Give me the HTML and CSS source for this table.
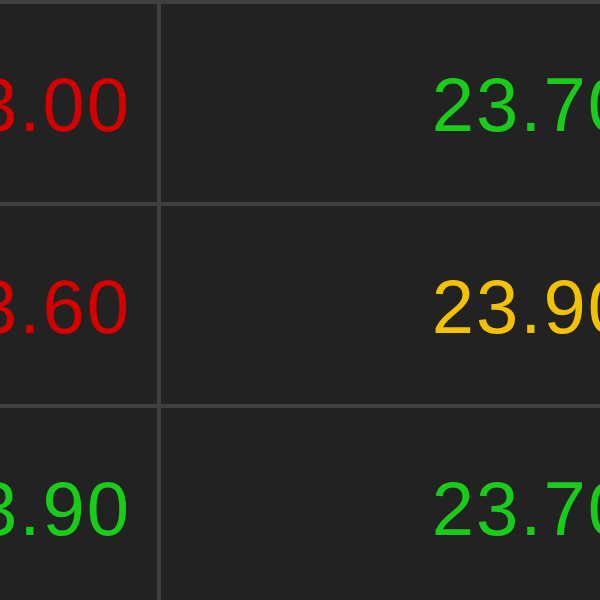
FILE: index.html
```html
<!DOCTYPE html>
<html lang="en">
<head>
    <meta charset="UTF-8">
    <meta name="viewport" content="width=device-width, initial-scale=1.0">
    <title>Price Board</title>
    <link rel="stylesheet" href="styles.css">
</head>
<body>
    <div class="board">
        <div class="cell prev down">23.00</div>
        <div class="cell last up">23.70</div>

        <div class="cell prev down">23.60</div>
        <div class="cell last flat">23.90</div>

        <div class="cell prev up">23.90</div>
        <div class="cell last up">23.70</div>
    </div>
</body>
</html>
```

FILE: styles.css
```css
html, body {
    margin: 0;
    padding: 0;
    overflow: hidden;
    background-color: #222222;
}
.board {
    display: grid;
    grid-template-columns: 240px 491px;
    grid-auto-rows: 198px;
    gap: 4px;
    padding-top: 4px;
    margin-left: -83px;
    width: max-content;
    background-color: #3f3f3f;
}
.cell {
    display: flex;
    align-items: center;
    justify-content: flex-end;
    padding-top: 3px;
    background-color: #222222;
    font-family: "Liberation Sans", Arial, sans-serif;
    font-size: 76px;
    line-height: 1;
    letter-spacing: 2px;
    white-space: nowrap;
}
.prev {
    padding-right: 26px;
}
.last {
    padding-right: 20px;
}
.down {
    color: #d50000;
}
.up {
    color: #1acc1a;
}
.flat {
    color: #f2c200;
}
```
